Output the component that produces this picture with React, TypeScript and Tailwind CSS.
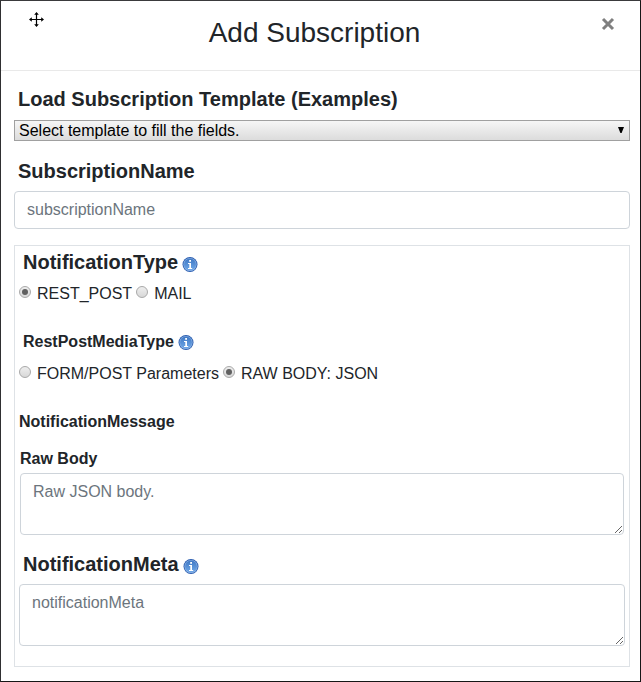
import React from "react";

function InfoIcon() {
  return (
    <svg width="16" height="16" viewBox="0 0 16 16" role="img" aria-label="Information" className="shrink-0">
      <defs>
        <linearGradient id="infoFill" x1="0" y1="0" x2="0" y2="1">
          <stop offset="0" stopColor="#3f78c4" />
          <stop offset="1" stopColor="#6fa8e8" />
        </linearGradient>
      </defs>
      <circle cx="8" cy="8.5" r="7.5" fill="#2a5db0" />
      <circle cx="8" cy="8.5" r="6.6" fill="#8fb4e4" />
      <circle cx="8" cy="8.5" r="5.9" fill="url(#infoFill)" />
      <rect x="7.2" y="4" width="1.8" height="1.8" fill="#fff" />
      <path d="M6 7h3v5h1.2v1H6v-1h1.3V8H6z" fill="#fff" />
    </svg>
  );
}

type RadioProps = { name: string; label: string; checked?: boolean };

function Radio({ name, label, checked }: RadioProps) {
  return (
    <label className="flex items-center">
      <input
        type="radio"
        name={name}
        defaultChecked={checked}
        className="mr-1.5 mb-1 grid size-3 shrink-0 appearance-none place-items-center rounded-full border border-[#a9a9a9] bg-linear-to-b from-[#eeeeee] to-[#d8d8d8] before:hidden before:size-1.5 before:rounded-full before:bg-[#606060] before:content-[''] checked:before:block"
      />
      {label}
    </label>
  );
}

const heading = "text-xl leading-6 font-bold";
const field =
  "block w-full rounded-[4px] border border-[#ced4da] bg-white px-3 py-1.5 text-base leading-6 text-[#495057] placeholder:text-[#6c757d]";

export default function App() {
  return (
    <main className="border border-t-[#3a3a3c] border-r-[#161616] border-b-[#161616] border-l-[#2f2f31] bg-white font-['Liberation_Sans',Arial,sans-serif] text-base text-[#212529]">
      <header className="grid grid-cols-[1fr_auto_1fr] items-start border-b border-[#e9e9e9] pt-2.5 pr-6 pb-4 pl-7">
        <svg width="16" height="16" viewBox="0 0 16 16" fill="none" stroke="#000" className="mt-px" aria-hidden="true">
          <path d="M7.5 1v13M1 7.5h13" strokeWidth="1.2" />
          <path d="M7.5 0l2.3 2.8H5.2zM7.5 15l2.3-2.8H5.2zM0 7.5l2.8-2.3v4.6zM15 7.5l-2.8-2.3v4.6z" fill="#000" stroke="none" />
        </svg>
        <h1 className="pr-4 text-[28px] leading-[43px]">Add Subscription</h1>
        <button type="button" aria-label="Close" className="mt-[5px] justify-self-end">
          <svg width="16" height="16" viewBox="0 0 16 16" stroke="#7f7f7f" strokeWidth="3">
            <path d="M3 3l10 10M13 3L3 13" />
          </svg>
        </button>
      </header>

      <form className="pt-4 pr-2.5 pb-[14px] pl-[13px]">
        <label htmlFor="template" className={`block pl-1 ${heading}`}>
          Load Subscription Template (Examples)
        </label>
        <div className="relative mt-[9px]">
          <select
            id="template"
            className="block h-[21px] w-full appearance-none border border-[#a0a0a0] bg-linear-to-b from-[#f6f6f6] to-[#dcdcdc] pl-1 text-base leading-[19px] text-black"
          >
            <option>Select template to fill the fields.</option>
          </select>
          <svg width="6" height="6" viewBox="0 0 6 6" className="pointer-events-none absolute top-[7px] right-1.5" aria-hidden="true">
            <path d="M0 0h6L3.6 6H2.4z" fill="#000" />
          </svg>
        </div>

        <label htmlFor="subscription" className={`mt-[18px] block pl-1 ${heading}`}>
          SubscriptionName
        </label>
        <input id="subscription" type="text" placeholder="subscriptionName" className={`mt-2 h-[38px] ${field}`} />

        <section className="mt-4 border border-[#dee2e6] px-1 pt-1 pb-5">
          <h2 className={`flex items-center gap-1 pl-1 ${heading}`}>
            NotificationType
            <span className="pt-1"><InfoIcon /></span>
          </h2>
          <div className="mt-2 flex gap-1 leading-6">
            <Radio name="type" label="REST_POST" checked />
            <Radio name="type" label="MAIL" />
          </div>

          <h3 className="mt-6 flex items-center gap-1 pl-1 leading-6 font-bold">
            RestPostMediaType
            <InfoIcon />
          </h3>
          <div className="mt-2 flex gap-1 leading-6">
            <Radio name="media" label="FORM/POST Parameters" />
            <Radio name="media" label="RAW BODY: JSON" checked />
          </div>

          <h3 className="mt-6 leading-6 font-bold">NotificationMessage</h3>
          <div className="mt-[13px] px-px">
            <label htmlFor="raw" className="block leading-6 font-bold">
              Raw Body
            </label>
            <textarea id="raw" placeholder="Raw JSON body." className={`mt-0.5 h-[62px] resize ${field}`} />
          </div>

          <label htmlFor="meta" className={`mt-[17px] flex items-center gap-1 pl-1 ${heading}`}>
            NotificationMeta
            <span className="pt-1"><InfoIcon /></span>
          </label>
          <textarea id="meta" placeholder="notificationMeta" className={`mt-2 h-[62px] resize ${field}`} />
        </section>
      </form>
    </main>
  );
}
